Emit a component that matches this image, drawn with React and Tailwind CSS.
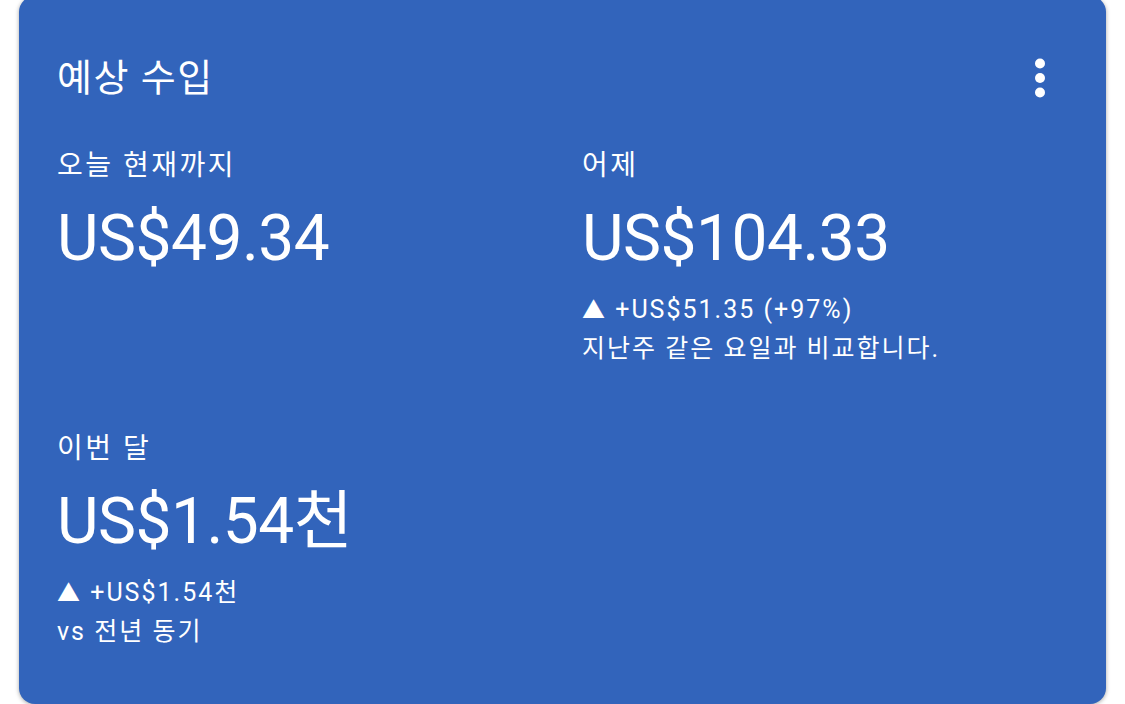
const FONT = "font-['Roboto','Noto_Sans_CJK_KR',sans-serif]"

function Kebab() {
  return (
    <svg width="12" height="40" viewBox="0 0 12 40" className="mr-[22px]">
      <circle cx="6" cy="5.5" r="5" fill="white" />
      <circle cx="6" cy="20" r="5" fill="white" />
      <circle cx="6" cy="34.5" r="5" fill="white" />
    </svg>
  )
}

function Metric({ label, value, delta, note }) {
  return (
    <div className="flex flex-col">
      <p className="mt-[3px] text-[28px] leading-[36px] tracking-[2.5px]">{label}</p>
      <p className="mt-[19px] text-[64px] leading-[72px] tracking-[-0.5px]">{value}</p>
      {delta && (
        <div className="mt-[16px] text-[25px] leading-[38px] tracking-[2px]">
          <p>
            <span className="text-[23px]">▲</span> {delta}
          </p>
          <p>{note}</p>
        </div>
      )}
    </div>
  )
}

export default function App() {
  return (
    <div className={`min-h-screen bg-white overflow-hidden ${FONT}`}>
      <div className="mx-[19px] -mt-1 h-[708px] rounded-2xl bg-[#3264bb] shadow-[0_1px_4px_rgba(0,0,0,0.35)] px-[38px] pt-[62px] text-white">
        {/* Header */}
        <div className="flex h-10 items-center justify-between">
          <h1 className="text-[38px] leading-10 tracking-[1.5px]">예상 수입</h1>
          <Kebab />
        </div>

        {/* Metrics */}
        <div className="mt-[47px] grid grid-cols-[525px_1fr] gap-y-[60px]">
          <Metric label="오늘 현재까지" value="US$49.34" />
          <Metric
            label="어제"
            value="US$104.33"
            delta="+US$51.35 (+97%)"
            note="지난주 같은 요일과 비교합니다."
          />
          <Metric
            label="이번 달"
            value="US$1.54천"
            delta="+US$1.54천"
            note="vs 전년 동기"
          />
        </div>
      </div>
    </div>
  )
}
